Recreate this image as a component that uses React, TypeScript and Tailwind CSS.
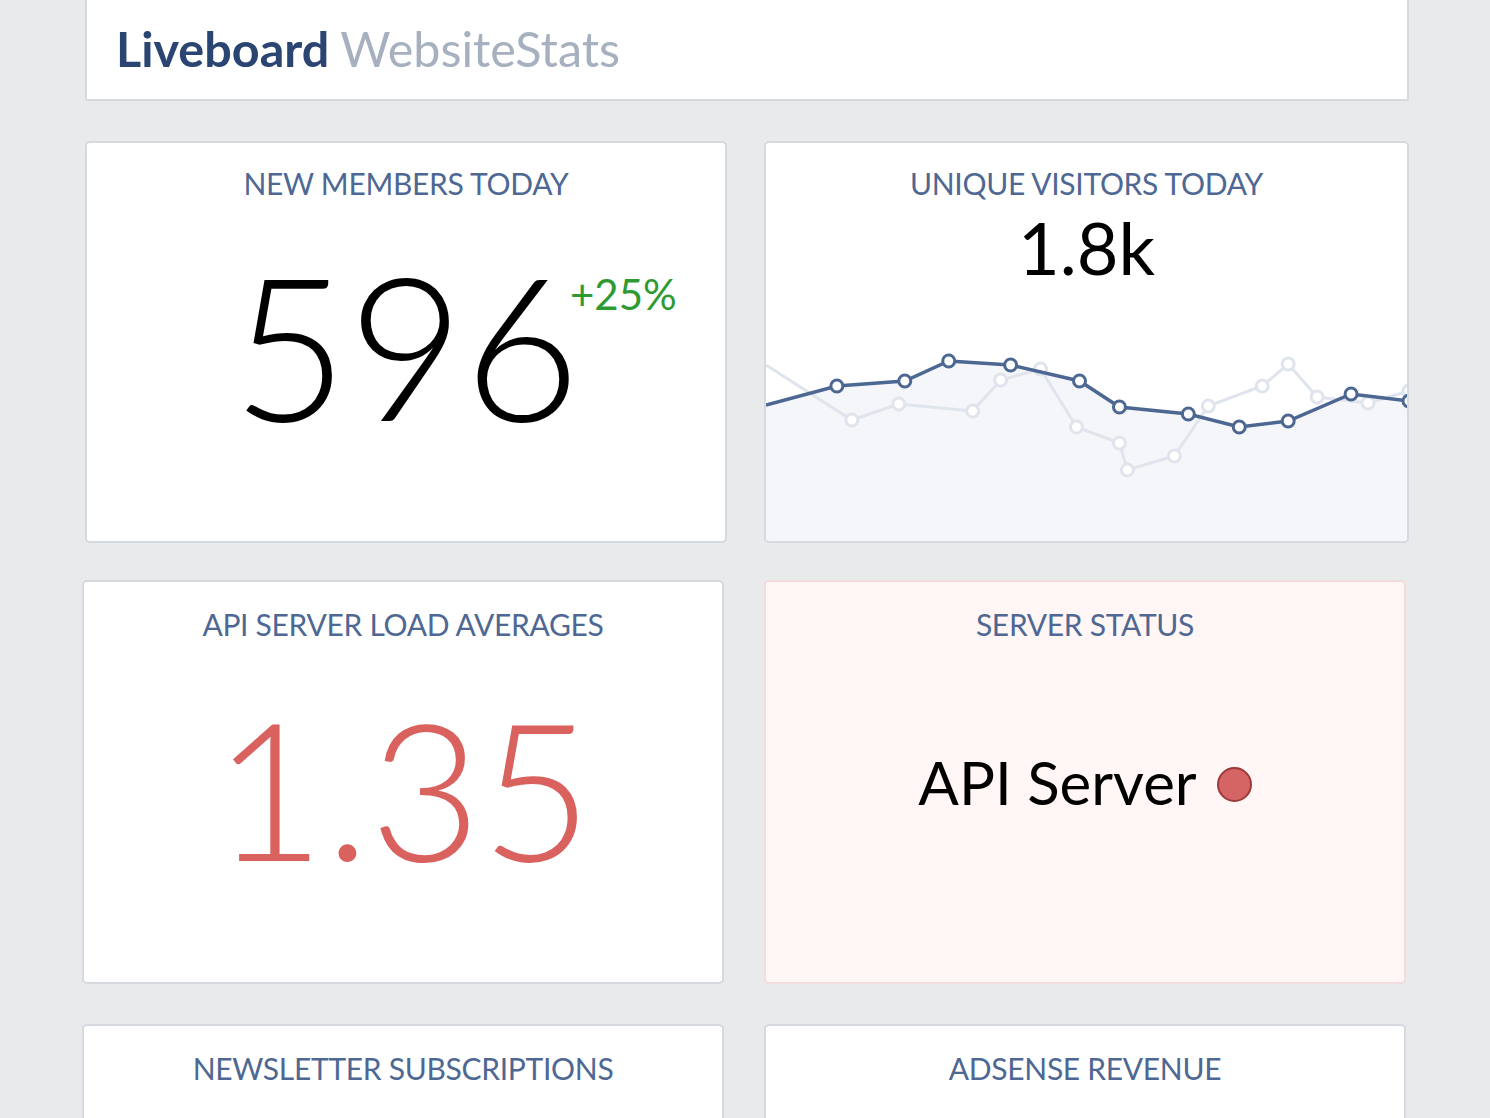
const dark: [number, number][] = [
  [765, 405], [836, 386], [904, 381], [948, 361], [1010, 365], [1079, 381],
  [1119, 407], [1188, 414], [1239, 427], [1288, 421], [1351, 394], [1409, 401],
];
const light: [number, number][] = [
  [765, 365], [851, 420], [898, 404], [972, 411], [1000, 380], [1040, 369],
  [1076, 427], [1119, 443], [1127, 470], [1174, 456], [1208, 406], [1262, 386],
  [1288, 364], [1317, 397], [1368, 403], [1409, 391],
];

const line = (pts: [number, number][]) => pts.map(([x, y], i) => `${i ? 'L' : 'M'}${x},${y}`).join(' ');

function Label({ children }: { children: string }) {
  return <div className="text-center text-[30px] leading-[34px] text-[#4e6893] tracking-[-0.3px]">{children}</div>;
}

function Card({ children, className = '' }: { children: React.ReactNode; className?: string }) {
  return <div className={`flex flex-col rounded-[5px] border-2 pt-[23px] ${className}`}>{children}</div>;
}

function Chart() {
  return (
    <svg className="mt-auto block h-[212px] w-full" viewBox="765 329 642 212" preserveAspectRatio="none">
      <path d={`${line(dark)} L1409,541 L765,541 Z`} fill="#f4f6f9" />
      <path d={line(light)} fill="none" stroke="#dfe4ed" strokeWidth="3" />
      {light.slice(1).map(([x, y], i) => (
        <circle key={i} cx={x} cy={y} r="6" fill="#fff" stroke="#dfe4ed" strokeWidth="3" />
      ))}
      <path d={line(dark)} fill="none" stroke="#4c6792" strokeWidth="3.5" />
      {dark.slice(1).map(([x, y], i) => (
        <circle key={i} cx={x} cy={y} r="6" fill="#fff" stroke="#4c6792" strokeWidth="3" />
      ))}
    </svg>
  );
}

export default function App() {
  return (
    <div className="min-h-screen overflow-hidden bg-[#e9eaec]" style={{ fontFamily: 'Lato, "Open Sans", sans-serif' }}>
      {/* header */}
      <div className="ml-[85px] mr-[81px] flex h-[101px] items-center rounded-b-[3px] border-2 border-t-0 border-[#d6d9dd] bg-white pb-[2px] pl-[29px]">
        <span className="text-[48.5px] font-bold leading-none text-[#2b4572]">Liveboard</span>
        <span className="ml-[11px] text-[48.5px] leading-none text-[#a6b0bf]">WebsiteStats</span>
      </div>

      {/* row 1 */}
      <div className="mt-[40px] flex gap-[37px] pl-[85px]">
        <Card className="h-[402px] w-[642px] border-[#d6d9dd] bg-white">
          <Label>NEW MEMBERS TODAY</Label>
          <div className="flex flex-1 items-center justify-center pb-[54px]">
            <div className="relative">
              <span className="text-[200px] font-light leading-none text-black">596</span>
              <span className="absolute left-[100%] top-[29px] ml-[-10px] text-[42px] leading-none text-[#2e9b32]">+25%</span>
            </div>
          </div>
        </Card>
        <Card className="h-[402px] w-[645px] overflow-hidden border-[#d6d9dd] bg-white">
          <Label>UNIQUE VISITORS TODAY</Label>
          <div className="mt-[11px] text-center text-[72px] leading-none text-black">1.8k</div>
          <Chart />
        </Card>
      </div>

      {/* row 2 */}
      <div className="mt-[37px] flex gap-[40px] pl-[82px]">
        <Card className="h-[404px] w-[642px] border-[#d6d9dd] bg-white pt-[25px]">
          <Label>API SERVER LOAD AVERAGES</Label>
          <div className="flex flex-1 items-center justify-center pb-[50px]">
            <span className="text-[192px] font-light leading-none text-[#d9625f]">1.35</span>
          </div>
        </Card>
        <Card className="h-[404px] w-[642px] border-[#f3dcdc] bg-[#fff6f5] pt-[25px]">
          <Label>SERVER STATUS</Label>
          <div className="flex flex-1 items-center justify-center gap-[20px] pb-[60px]">
            <span className="text-[60px] leading-none text-black">API Server</span>
            <span className="mt-[6px] h-[35px] w-[35px] rounded-full border-2 border-[#9c3a3a] bg-[#d56464]" />
          </div>
        </Card>
      </div>

      {/* row 3 */}
      <div className="mt-[40px] flex gap-[40px] pl-[82px]">
        <Card className="h-[200px] w-[642px] border-[#d6d9dd] bg-white pt-[25px]">
          <Label>NEWSLETTER SUBSCRIPTIONS</Label>
        </Card>
        <Card className="h-[200px] w-[642px] border-[#d6d9dd] bg-white pt-[25px]">
          <Label>ADSENSE REVENUE</Label>
        </Card>
      </div>
    </div>
  );
}
